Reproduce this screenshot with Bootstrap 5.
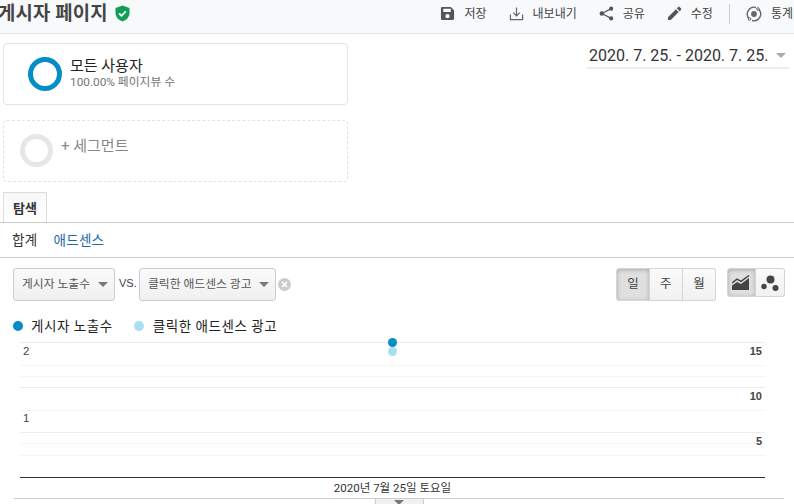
<!DOCTYPE html>
<html lang="ko">
<head>
<meta charset="utf-8">
<title>게시자 페이지</title>
<link href="https://cdn.jsdelivr.net/npm/bootstrap@5.3.0/dist/css/bootstrap.min.css" rel="stylesheet">
<style>
html,body{height:504px;overflow:hidden;background:#fff;}
body{font-family:"Roboto","Noto Sans CJK KR",sans-serif;color:#333;}
.ga-head{height:34px;background:#f8f9fa;border-bottom:1px solid #e3e3e3;padding:0 1px 6px 0;}
.ga-title-wrap{gap:7px;}
.ga-title{font-size:18.8px;font-weight:700;color:#444;margin-left:-2px;line-height:26px;letter-spacing:.2px;}
.ga-act{font-size:12px;color:#444;gap:9px;}
.ga-acts{gap:22px;}
.ga-sep{width:1px;height:20px;background:#ccc;margin:0 -6px;}
.seg-area{height:155px;}
.seg-col{width:345px;margin-left:3px;}
.seg-box{height:62px;border:1px solid #e3e3e3;border-radius:4px;}
.seg-live{padding-left:24px;gap:8px;margin-top:9px;}
.seg-add{margin-top:15px;border-style:dashed;padding-left:16px;gap:8px;}
.ring{width:34px;height:34px;border-radius:50%;border:5px solid #058dc7;}
.ring-add{width:33px;height:33px;border-color:#e6e6e6;margin-top:-2px;}
.seg-name{font-size:15px;line-height:16px;color:#222;margin-top:-2px;}
.seg-sub{font-size:11.8px;line-height:14px;color:#757575;margin-top:1px;}
.add-lbl{font-size:15px;color:#888;margin-top:-9px;}
.date-pick{width:204px;height:25px;margin:10px 4px 0 0;padding:0 4px 0 3px;border-bottom:2px solid #eee;font-size:16px;color:#333;line-height:23px;white-space:nowrap;}
.tri{width:0;height:0;border-left:5px solid transparent;border-right:5px solid transparent;border-top:5px solid #aaa;display:inline-block;}
.tab-row{height:34px;border-bottom:1px solid #ccc;padding-left:3px;align-items:flex-end;}
.tab-on{height:30px;width:44px;border:1px solid #ddd;border-bottom:0;background:linear-gradient(#f8f8f8,#fff);font-size:13px;font-weight:700;color:#333;text-align:center;line-height:31px;}
.sub-row{height:35px;border-bottom:1px solid #ccc;padding-left:12px;gap:16px;font-size:13.5px;letter-spacing:.3px;}
.sub-on{color:#333;}
.sub-link{color:#1a6aa8;}
.ctl-row{height:53px;padding:10px 9.500px 0 13px;}
.ga-ctl{height:33px;}
.ga-sel{height:33px;border:1px solid #ccc;border-radius:3px;background:linear-gradient(#fafafa,#f0f0f0);font-size:11.8px;color:#555;padding:0 6px 0 8px;white-space:nowrap;}
.sel-a{width:102px;}
.sel-b{width:137px;}
.ga-vs{font-family:"Liberation Sans",sans-serif;font-size:11px;color:#444;margin:-3px 4px 0 4px;width:16px;}
.tri-d{border-top-color:#777;}
.x-ico{margin-left:2px;}
.ga-btn{height:33px;width:33.3px;border:1px solid #d5d5d5;border-left:0;background:linear-gradient(#fafafa,#f1f1f1);font-size:12.5px;color:#444;}
.ga-btn:first-child{border-left:1px solid #d5d5d5;border-radius:3px 0 0 3px;}
.ga-btn:last-child{border-radius:0 3px 3px 0;}
.ga-btn.on{background:#e0e0e0;box-shadow:inset 0 1px 4px rgba(0,0,0,.25);}
.view-btns{margin-left:11px;align-self:flex-start;}
.view-btns .ga-btn{height:29px;width:28.7px;}
.legend-row{height:31px;padding:5px 0 0 13px;font-size:13.5px;color:#222;gap:21px;letter-spacing:.55px;}
.leg-i{gap:8px;}
.leg-b{gap:9px;}
.dot{width:10px;height:10px;border-radius:50%;}
.c-a{background:#058dc7;}
.c-b{background:#aadff3;}
.chart{position:relative;margin:0 29px 0 20px;height:136px;}
.gl{border-top:1px solid #f5f5f5;}
.gl-m{border-top:1px solid #ececec;}
.g-11{height:11px;}.g-12{height:12px;}.g-22{height:22px;}.g-23{height:23px;}
.axis{border-top:1px solid #333;}
.pt{position:absolute;left:367.5px;width:9px;height:9px;border-radius:50%;}
.pt-a{top:-4px;}
.pt-b{top:5px;}
.yl{position:absolute;font-family:"Liberation Sans",sans-serif;font-size:11.5px;line-height:12px;color:#444;}
.yr{right:3px;font-size:11px;font-weight:700;}
.y-2{left:3px;top:3px;}
.y-1{left:3px;top:70px;}
.y-15{top:3px;}
.y-10{top:48px;}
.y-5{top:93px;}
.date-lbl{font-size:11.5px;line-height:12px;text-align:center;color:#333;padding:4px 0 0;margin:0 29px 0 20px;}
.slider-row{height:20px;padding:4px 10px 0 14px;}
.sl-line{border-top:1px solid #ccc;}
.sl-hand{width:49px;border-left:1px solid #ccc;border-right:1px solid #ccc;border-top:1px solid #ccc;background:#f1f1f1;text-align:center;line-height:0;padding-top:1px;}
</style>
</head>
<body>
<header class="ga-head d-flex align-items-center justify-content-between overflow-hidden">
  <div class="d-flex align-items-center ga-title-wrap">
    <span class="ga-title">게시자 페이지</span>
    <svg width="15" height="17" viewBox="0 0 15 17" aria-hidden="true"><path d="M7.5 0.5 14.5 3v5c0 4-3 7-7 8.500C3.500 15 .5 12 .5 8V3z" fill="#0f9d58"/><path d="M4.200 8.500l2.300 2.300 4.300-4.500" fill="none" stroke="#fff" stroke-width="1.800"/></svg>
  </div>
  <nav class="d-flex align-items-center ga-acts">
    <span class="d-flex align-items-center ga-act">
      <svg width="15" height="15" viewBox="0 0 16 16" aria-hidden="true"><path fill="#555" fill-rule="evenodd" d="M2 1h9.500L15 4.500V13.500a1.500 1.500 0 0 1-1.500 1.500h-11A1.500 1.500 0 0 1 1 13.500V2.500A1.500 1.500 0 0 1 2 1zM3.500 3v3.500h8V3zM8 8.500a2.300 2.300 0 1 0 0 4.600 2.300 2.300 0 0 0 0-4.600z"/></svg>저장</span>
    <span class="d-flex align-items-center ga-act">
      <svg width="15" height="15" viewBox="0 0 16 16" aria-hidden="true"><path fill="none" stroke="#666" stroke-width="1.300" d="M1.500 9v5.500h13V9M8 1.500V10M4.500 7 8 10.500 11.500 7"/></svg>내보내기</span>
    <span class="d-flex align-items-center ga-act">
      <svg width="15" height="15" viewBox="0 0 16 16" aria-hidden="true"><g fill="#555"><circle cx="3" cy="8" r="2.400"/><circle cx="13" cy="2.800" r="2.200"/><circle cx="13" cy="13.200" r="2.200"/></g><path stroke="#555" stroke-width="1.300" d="M3 8 13 2.800M3 8l10 5.200"/></svg>공유</span>
    <span class="d-flex align-items-center ga-act">
      <svg width="15" height="15" viewBox="0 0 16 16" aria-hidden="true"><path fill="#555" d="M1 12v3h3l8.500-8.500-3-3zM10.500 2.500l3 3 1.500-1.500a1 1 0 0 0 0-1.400l-1.600-1.600a1 1 0 0 0-1.400 0z"/></svg>수정</span>
    <span class="ga-sep"></span>
    <span class="d-flex align-items-center ga-act">
      <svg width="16" height="16" viewBox="0 0 16 16" aria-hidden="true"><path fill="none" stroke="#666" stroke-width="1.400" d="M3 12.500a6.800 6.800 0 0 1 7-11M13 3.500a6.800 6.800 0 0 1-7 11"/><circle cx="8" cy="8" r="2.900" fill="#666"/><circle cx="12" cy="3" r="1.300" fill="none" stroke="#666"/><circle cx="3.500" cy="13" r="1.300" fill="none" stroke="#666"/></svg>통계</span>
  </nav>
</header>

<section class="seg-area d-flex justify-content-between">
  <div class="seg-col">
    <div class="seg-box seg-live d-flex align-items-center">
      <span class="ring"></span>
      <div><div class="seg-name">모든 사용자</div><div class="seg-sub">100.00% 페이지뷰 수</div></div>
    </div>
    <div class="seg-box seg-add d-flex align-items-center">
      <span class="ring ring-add"></span>
      <span class="add-lbl">+ 세그먼트</span>
    </div>
  </div>
  <div class="date-pick d-flex align-items-center justify-content-between"><span>2020. 7. 25. - 2020. 7. 25.</span><span class="tri"></span></div>
</section>

<div class="tab-row d-flex"><div class="tab-on">탐색</div></div>
<div class="sub-row d-flex align-items-center"><span class="sub-on">합계</span><span class="sub-link">애드센스</span></div>

<div class="ctl-row d-flex justify-content-between">
  <div class="d-flex align-items-start ga-ctl">
    <div class="ga-sel sel-a d-flex align-items-center justify-content-between">게시자 노출수 <span class="tri tri-d"></span></div>
    <span class="ga-vs align-self-center">VS.</span>
    <div class="ga-sel sel-b d-flex align-items-center justify-content-between">클릭한 애드센스 광고 <span class="tri tri-d"></span></div>
    <svg class="x-ico align-self-center" width="13" height="13" viewBox="0 0 13 13" aria-hidden="true"><circle cx="6.500" cy="6.500" r="6.500" fill="#ccc"/><path d="M4 4l5 5M9 4 4 9" stroke="#fff" stroke-width="1.500"/></svg>
  </div>
  <div class="d-flex">
    <div class="d-flex">
      <div class="ga-btn on d-flex align-items-center justify-content-center">일</div>
      <div class="ga-btn d-flex align-items-center justify-content-center">주</div>
      <div class="ga-btn d-flex align-items-center justify-content-center">월</div>
    </div>
    <div class="d-flex view-btns">
      <div class="ga-btn on d-flex align-items-center justify-content-center">
        <svg width="18" height="15" viewBox="0 0 18 15" aria-hidden="true"><path fill="#444" d="M0 15V10.500L5 7l4 2 8-6V15z"/><path fill="none" stroke="#444" stroke-width="1.400" d="M0 8 5 4.200l4 2.200L17 .5"/></svg>
      </div>
      <div class="ga-btn d-flex align-items-center justify-content-center">
        <svg width="18" height="16" viewBox="0 0 18 16" aria-hidden="true"><g fill="#444"><circle cx="9.500" cy="4.500" r="4"/><circle cx="3" cy="11.500" r="2.700"/><circle cx="14.500" cy="13" r="3"/></g></svg>
      </div>
    </div>
  </div>
</div>

<div class="legend-row d-flex align-items-start">
  <span class="d-flex align-items-center leg-i"><span class="dot c-a"></span>게시자 노출수</span>
  <span class="d-flex align-items-center leg-b"><span class="dot c-b"></span>클릭한 애드센스 광고</span>
</div>

<div class="chart">
  <div class="gl-m g-23"></div><div class="gl g-11"></div><div class="gl g-11"></div>
  <div class="gl-m g-23"></div><div class="gl g-22"></div><div class="gl-m g-11"></div><div class="gl g-12"></div>
  <div class="gl g-22"></div>
  <div class="axis"></div>
  <span class="yl y-2">2</span>
  <span class="yl y-1">1</span>
  <span class="yl yr y-15">15</span>
  <span class="yl yr y-10">10</span>
  <span class="yl yr y-5">5</span>
  <span class="pt c-a pt-a"></span>
  <span class="pt c-b pt-b"></span>
</div>
<div class="date-lbl">2020년 7월 25일 토요일</div>
<div class="slider-row d-flex">
  <div class="sl-line flex-grow-1"></div>
  <div class="sl-hand"><span class="tri tri-d"></span></div>
  <div class="sl-line flex-grow-1"></div>
</div>
<script src="https://cdn.jsdelivr.net/npm/bootstrap@5.3.0/dist/js/bootstrap.bundle.min.js"></script>
</body>
</html>
